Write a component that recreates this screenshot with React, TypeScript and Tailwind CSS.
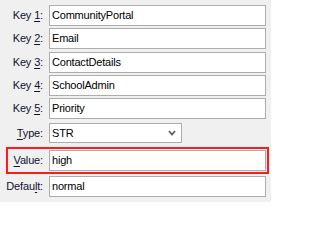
type FieldProps = { pre: string; key_: string; post: string; value: string };

const labelCls = "w-[43px] shrink-0 text-right whitespace-nowrap text-[11px] tracking-[-0.15px] text-[#101030]";
const inputCls =
  "ml-[6px] h-[21px] w-[217px] shrink-0 border border-[#adadad] bg-white pl-[2px] text-[11px] leading-[19px] tracking-[-0.2px] text-black";

function Label({ pre, key_, post }: { pre: string; key_: string; post: string }) {
  return (
    <span className={labelCls}>
      {pre}
      <span className="underline underline-offset-[2px]">{key_}</span>
      {post}
    </span>
  );
}

function Field({ pre, key_, post, value }: FieldProps) {
  return (
    <div className="flex items-center">
      <Label pre={pre} key_={key_} post={post} />
      <div className={inputCls}>{value}</div>
    </div>
  );
}

export default function App() {
  return (
    <div
      className="flex h-[202px] w-[271px] flex-col bg-[#f0f0f0] pt-[5px]"
      style={{ fontFamily: '"Liberation Sans", Arial, sans-serif' }}
    >
      <Field pre="Key " key_="1" post=":" value="CommunityPortal" />
      <div className="mt-[2px]">
        <Field pre="Key " key_="2" post=":" value="Email" />
      </div>
      <div className="mt-[3px]">
        <Field pre="Key " key_="3" post=":" value="ContactDetails" />
      </div>
      <div className="mt-[2px]">
        <Field pre="Key " key_="4" post=":" value="SchoolAdmin" />
      </div>
      <div className="mt-[2px]">
        <Field pre="Key " key_="5" post=":" value="Priority" />
      </div>

      {/* type dropdown */}
      <div className="mt-[4px] flex items-center">
        <Label pre="" key_="T" post="ype:" />
        <div className="ml-[6px] flex h-[20px] w-[133px] items-center justify-between border border-[#adadad] bg-white pl-[2px] pr-[5px] text-[11px] tracking-[-0.2px] text-black">
          <span>STR</span>
          <svg width="8" height="6" viewBox="0 0 8 6">
            <polyline points="1,1 4,4.5 7,1" fill="none" stroke="#606060" strokeWidth="1.8" />
          </svg>
        </div>
      </div>

      {/* highlighted value row */}
      <div className="mt-[4px] ml-[6px] flex h-[27px] w-[263px] items-center border-2 border-[#ff1a1a]">
        <span className="w-[35px] shrink-0 text-right whitespace-nowrap text-[11px] tracking-[-0.15px] text-[#101030]">
          <span className="underline underline-offset-[2px]">V</span>alue:
        </span>
        <div className={inputCls}>high</div>
      </div>

      <div className="mt-[2px]">
        <Field pre="Defau" key_="l" post="t:" value="normal" />
      </div>
    </div>
  );
}
